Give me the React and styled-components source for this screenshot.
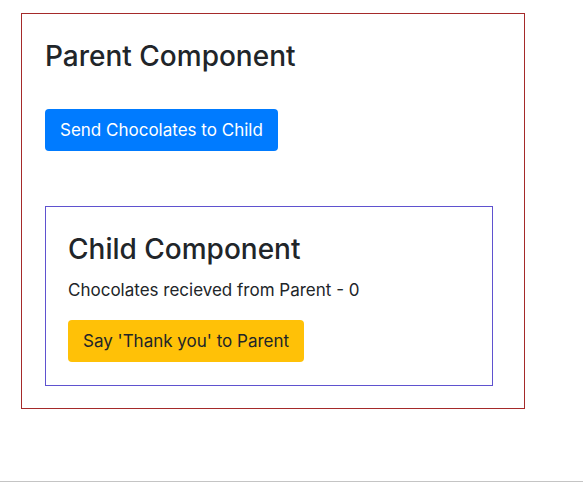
import React, { useState } from 'react';
import styled, { createGlobalStyle } from 'styled-components';

const GlobalStyle = createGlobalStyle`
  * {
    box-sizing: border-box;
  }

  body {
    margin: 0;
    font-family: Inter, "Liberation Sans", sans-serif;
    font-size: 17px;
    line-height: 1.5;
    color: #212529;
    background: #fff;
  }
`;

const Child = ({ chocolates, onThank }) => (
  <ChildBox>
    <Heading>Child Component</Heading>
    <Text>Chocolates recieved from Parent - {chocolates}</Text>
    <Button variant="warning" onClick={onThank}>
      Say 'Thank you' to Parent
    </Button>
  </ChildBox>
);

const App = () => {
  const [chocolates, setChocolates] = useState(0);

  return (
    <Page>
      <GlobalStyle />
      <ParentBox>
        <Heading spaced>Parent Component</Heading>
        <Button onClick={() => setChocolates(chocolates + 1)}>
          Send Chocolates to Child
        </Button>
        <Child chocolates={chocolates} onThank={() => {}} />
      </ParentBox>
    </Page>
  );
};

export default App;

const Page = styled.div`
  height: 100vh;
  padding: 13px 0 0 21px;
  border-bottom: 1px solid #c4c4c4;
`;

const ParentBox = styled.div`
  width: 504px;
  padding: 26px 23px 22px;
  border: 1px solid #a52a2a;
`;

const ChildBox = styled.div`
  width: 448px;
  margin-top: 55px;
  padding: 26px 22px 23px;
  border: 1px solid #5f52cf;
`;

const Heading = styled.h2`
  margin: 0 0 ${props => (props.spaced ? '35px' : '12px')};
  font-size: 28px;
  font-weight: 500;
  line-height: 1.2;
`;

const Text = styled.p`
  margin: 0 0 16px;
`;

const Button = styled.button`
  display: block;
  padding: 7px 14px;
  border: 1px solid transparent;
  border-radius: 4px;
  font-family: inherit;
  font-size: 17px;
  line-height: 26px;
  cursor: pointer;
  color: ${props => (props.variant === 'warning' ? '#212529' : '#fff')};
  background: ${props => (props.variant === 'warning' ? '#ffc107' : '#007bff')};
`;
